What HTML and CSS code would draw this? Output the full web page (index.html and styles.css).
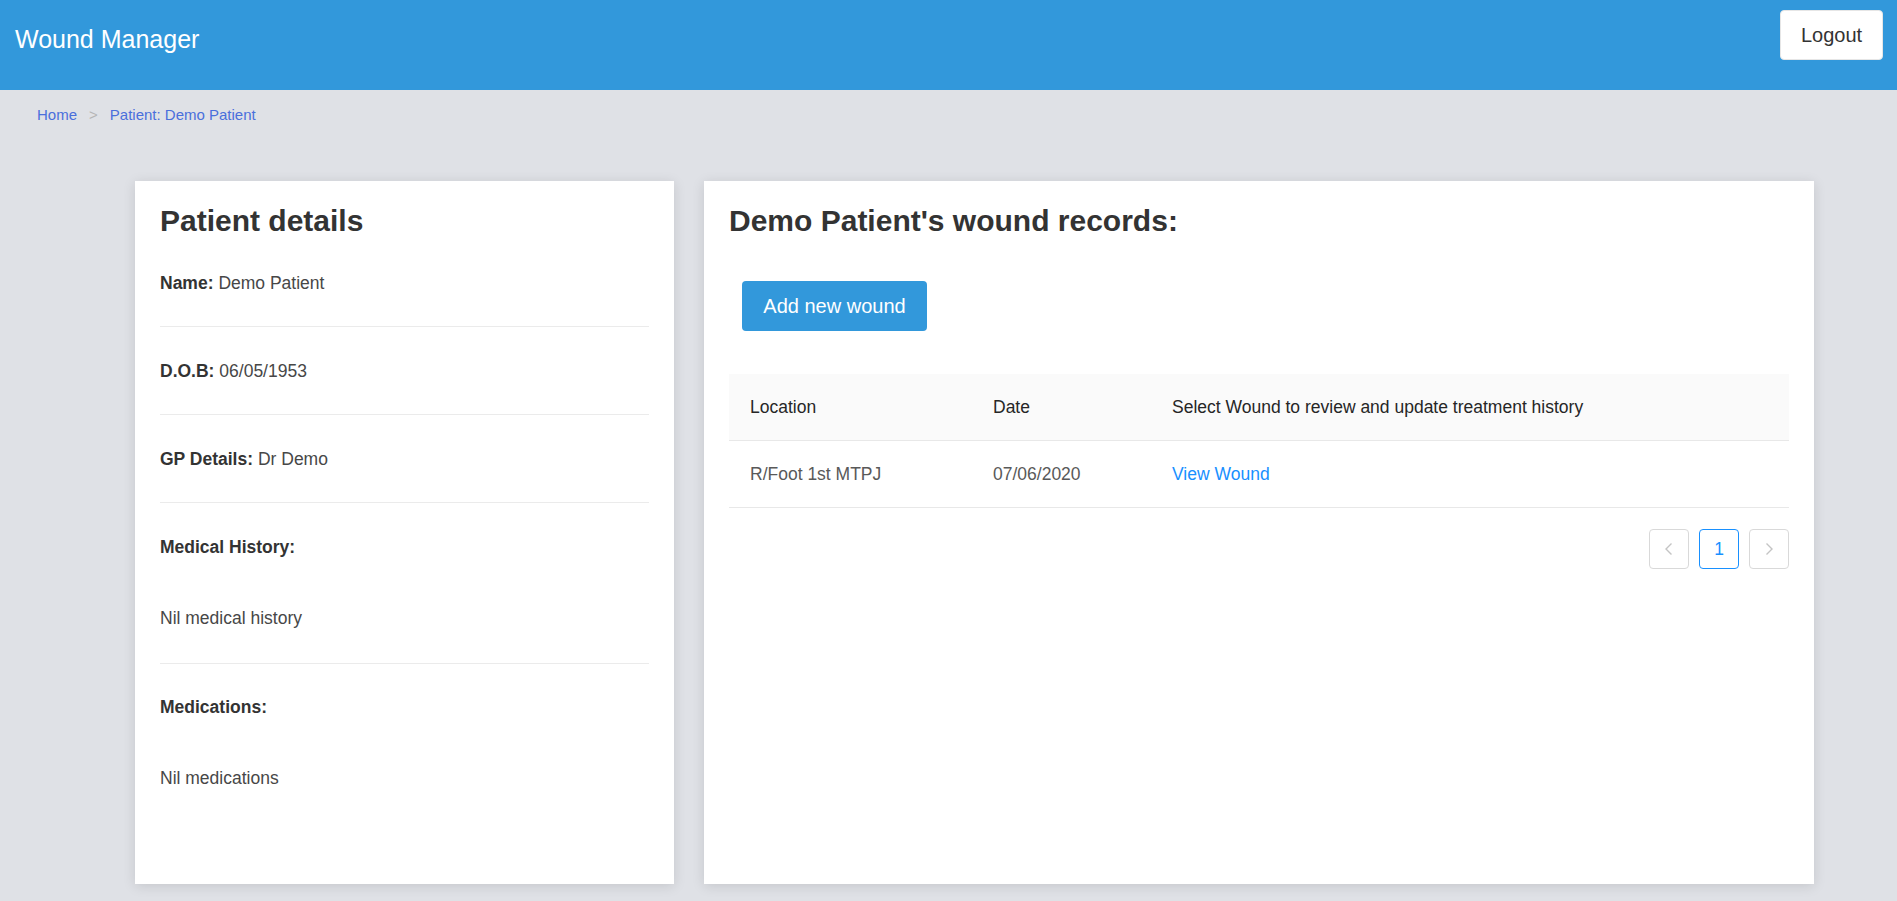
FILE: index.html
```html
<!DOCTYPE html>
<html lang="en">
<head>
<meta charset="utf-8">
<title>Wound Manager</title>
<link rel="stylesheet" href="styles.css">
</head>
<body>
<header class="topbar">
  <div class="brand">Wound Manager</div>
  <button class="logout">Logout</button>
</header>
<nav class="breadcrumb">
  <a class="crumb" href="#">Home</a><span class="sep">&gt;</span><a class="crumb" href="#">Patient: Demo Patient</a>
</nav>
<main class="content">
  <section class="card details">
    <h2 class="card-title">Patient details</h2>
    <div class="row"><b class="label">Name:</b> <span class="value">Demo Patient</span></div>
    <div class="row"><b class="label">D.O.B:</b> <span class="value">06/05/1953</span></div>
    <div class="row"><b class="label">GP Details:</b> <span class="value">Dr Demo</span></div>
    <div class="row block">
      <div class="label">Medical History:</div>
      <div class="value para">Nil medical history</div>
    </div>
    <div class="row block last">
      <div class="label">Medications:</div>
      <div class="value para">Nil medications</div>
    </div>
  </section>
  <section class="card records">
    <h2 class="card-title">Demo Patient's wound records:</h2>
    <button class="add-btn">Add new wound</button>
    <table class="wounds">
      <thead>
        <tr><th class="c-loc">Location</th><th class="c-date">Date</th><th>Select Wound to review and update treatment history</th></tr>
      </thead>
      <tbody>
        <tr><td>R/Foot 1st MTPJ</td><td>07/06/2020</td><td><a class="view" href="#">View Wound</a></td></tr>
      </tbody>
    </table>
    <div class="pager">
      <span class="page-item disabled"><svg width="12" height="14" viewBox="0 0 12 14"><path d="M8.5 1.5 L3 7 L8.5 12.5" fill="none" stroke="#c4c4c4" stroke-width="1.4"/></svg></span>
      <span class="page-item active">1</span>
      <span class="page-item disabled"><svg width="12" height="14" viewBox="0 0 12 14"><path d="M3.5 1.5 L9 7 L3.5 12.5" fill="none" stroke="#c4c4c4" stroke-width="1.4"/></svg></span>
    </div>
  </section>
</main>
</body>
</html>
```
FILE: styles.css
```css
* { box-sizing: border-box; }
html, body { margin: 0; padding: 0; }
body {
  background: #dfe1e6;
  font-family: "Liberation Sans", Arial, sans-serif;
  color: #333;
  height: 901px;
  overflow: hidden;
}
.topbar {
  height: 90px;
  background: #3298db;
  display: flex;
  justify-content: space-between;
  align-items: flex-start;
  padding: 10px 14px 0 15px;
}
.brand {
  color: #fff;
  font-size: 25px;
  line-height: 28px;
  margin-top: 15px;
}
.logout {
  width: 103px;
  height: 50px;
  background: #fff;
  border: 1px solid #e6e6e6;
  border-radius: 4px;
  font-family: "Liberation Sans", Arial, sans-serif;
  font-size: 20px;
  color: #333;
  padding: 0;
}
.breadcrumb {
  padding: 14px 0 0 37px;
  height: 35px;
  font-size: 15px;
  line-height: 22px;
}
.crumb { color: #4a6fdc; text-decoration: none; }
.sep { color: #b5b5b5; margin: 0 12px; }
.content {
  display: flex;
  gap: 30px;
  padding: 56px 0 0 135px;
}
.card {
  background: #fff;
  height: 703px;
  box-shadow: 0 2px 12px rgba(0, 0, 0, 0.12);
}
.details { width: 539px; padding: 22px 25px 0 25px; }
.records { width: 1110px; padding: 22px 25px 0 25px; }
.card-title {
  margin: 0;
  font-size: 30px;
  line-height: 36px;
  font-weight: bold;
  color: #333;
}
.row {
  padding: 31.5px 0;
  line-height: 24px;
  font-size: 17.5px;
  border-bottom: 1px solid #ebebeb;
}
.row.last { border-bottom: none; }
.label { color: #333; font-weight: bold; }
.value { color: #474747; }
.para { margin-top: 47px; }
.row.block { padding-bottom: 33px; }
.add-btn {
  display: block;
  margin: 42px 0 0 13px;
  height: 50px;
  width: 185px;
  padding: 0;
  background: #3298db;
  color: #fff;
  border: none;
  border-radius: 4px;
  font-family: "Liberation Sans", Arial, sans-serif;
  font-size: 20px;
}
.wounds {
  margin-top: 43px;
  width: 100%;
  border-collapse: collapse;
  font-size: 17.5px;
  line-height: 26px;
}
.wounds th, .wounds td {
  text-align: left;
  padding: 20px 20px 20px 21px;
  border-bottom: 1px solid #e8e8e8;
  font-weight: normal;
}
.wounds th { background: #fafafa; color: #262626; }
.wounds td { color: #595959; }
.c-loc { width: 243px; }
.c-date { width: 179px; }
.view { color: #1890ff; text-decoration: none; }
.pager {
  display: flex;
  justify-content: flex-end;
  gap: 10px;
  margin-top: 21px;
}
.page-item {
  width: 40px;
  height: 40px;
  border: 1px solid #d9d9d9;
  border-radius: 4px;
  display: flex;
  align-items: center;
  justify-content: center;
  font-size: 17.5px;
}
.page-item.active { border-color: #1890ff; color: #1890ff; }
```
